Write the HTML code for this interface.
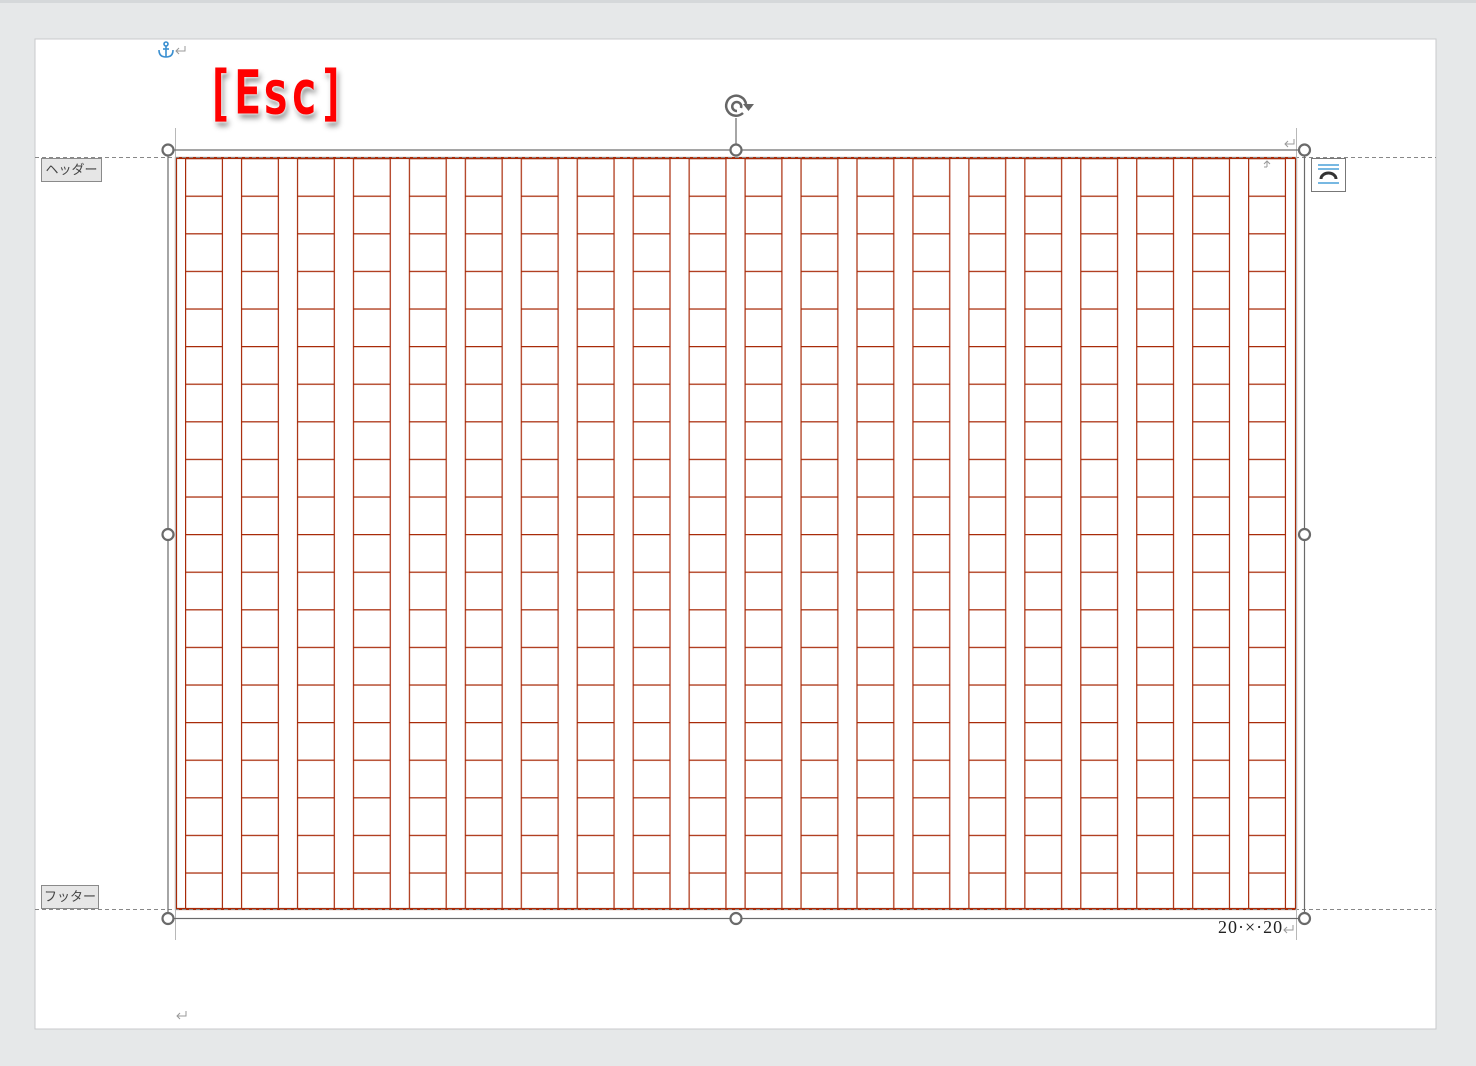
<!DOCTYPE html>
<html><head><meta charset="utf-8"><style>
html,body{margin:0;padding:0;width:1476px;height:1066px;overflow:hidden;background:#e6e8e9;}
svg{position:absolute;left:0;top:0}
.lbl{position:absolute;background:#e6e6e6;border:1px solid #8a8a8a;font:13px "Liberation Sans","Noto Sans CJK JP",sans-serif;color:#444;text-align:center;line-height:21px}
.esc{position:absolute;left:206px;top:57px;font:bold 45px "DejaVu Sans Mono","Liberation Mono",monospace;color:#f00;letter-spacing:1px;transform:scaleY(1.35);transform-origin:0 0;text-shadow:0 0 2px #fff,0 0 3px #fff,2px 3px 5px rgba(0,0,0,.45)}
.num{position:absolute;left:1218px;top:917px;font:18px "Liberation Serif",serif;color:#222;letter-spacing:1px}
</style></head><body>
<svg width="1476" height="1066" viewBox="0 0 1476 1066">
<defs>
<pattern id="g" patternUnits="userSpaceOnUse" x="185" y="158" width="55.95" height="37.6">
<line x1="0.6" y1="0" x2="0.6" y2="37.6" stroke="#a82a08" stroke-width="1.2"/>
<line x1="37.4" y1="0" x2="37.4" y2="37.6" stroke="#a82a08" stroke-width="1.2"/>
<line x1="0" y1="0.6" x2="37.5" y2="0.6" stroke="#a82a08" stroke-width="1.2"/>
</pattern>
</defs>
<rect x="0" y="0" width="1476" height="3" fill="#d5d8da"/>
<rect x="35" y="39" width="1401" height="990" fill="#fff" stroke="#c8cacc"/>
<rect x="185" y="158" width="1102" height="752" fill="url(#g)"/>
<rect x="176" y="158" width="1120" height="751" fill="none" stroke="#a82a08" stroke-width="2.2"/>
<line x1="35" y1="157.5" x2="1436" y2="157.5" stroke="#888" stroke-dasharray="4,3"/>
<line x1="35" y1="909.5" x2="1436" y2="909.5" stroke="#888" stroke-dasharray="4,3"/>
<line x1="175.5" y1="128" x2="175.5" y2="940" stroke="#b8b8b8"/>
<line x1="1296.5" y1="128" x2="1296.5" y2="940" stroke="#b8b8b8"/>
<rect x="168" y="150" width="1136.5" height="768.5" fill="none" stroke="#6a6a6a" stroke-width="1.2"/>
<line x1="736" y1="118" x2="736" y2="150" stroke="#6a6a6a" stroke-width="1.2"/>
<g fill="#fff" stroke="#6a6a6a" stroke-width="2.2">
<circle cx="168" cy="150" r="5.5"/><circle cx="736" cy="150" r="5.5"/><circle cx="1304.5" cy="150" r="5.5"/>
<circle cx="168" cy="534.5" r="5.5"/><circle cx="1304.5" cy="534.5" r="5.5"/>
<circle cx="168" cy="918.5" r="5.5"/><circle cx="736" cy="918.5" r="5.5"/><circle cx="1304.5" cy="918.5" r="5.5"/>
</g>
<g fill="none" stroke="#666" stroke-width="2.5">
<path d="M746 104 A10 10 0 1 0 743 113"/>
<path d="M741 108 A4.5 4.5 0 1 0 737 111"/>
</g>
<path d="M743 104 L754 104 L748.5 111 Z" fill="#666"/>
<rect x="1311.5" y="158.5" width="34" height="33" fill="#fff" stroke="#777"/>
<g stroke="#4aa0d8" stroke-width="1.5"><line x1="1318" y1="165" x2="1339" y2="165"/><line x1="1318" y1="169" x2="1339" y2="169"/><line x1="1318" y1="183" x2="1339" y2="183"/></g>
<path d="M1321 179 A7.5 6 0 0 1 1336 179" fill="none" stroke="#333" stroke-width="3"/>
<g fill="none" stroke="#999" stroke-width="1"><path d="M1294 139 v5 h-9 M1288 141 l-3 3 3 3"/>
<path d="M1293 925 v5 h-9 M1287 927 l-3 3 3 3"/>
<path d="M186 1011 v5 h-9 M180 1013 l-3 3 3 3"/>
<path d="M185 46 v5 h-9 M179 48 l-3 3 3 3"/>
<path d="M1267 167 v-6 M1264 164 l3-3 3 3 M1264 167 h3"/></g>
<g fill="none" stroke="#3a8fd0" stroke-width="1.6"><circle cx="166" cy="44" r="2"/><line x1="166" y1="46" x2="166" y2="57"/><path d="M159 50 q0 7 7 7 q7 0 7-7"/><line x1="163" y1="49" x2="169" y2="49"/></g>
</svg>
<div class="lbl" style="left:41px;top:158px;width:59px;height:22px">ヘッダー</div>
<div class="lbl" style="left:41px;top:885px;width:56px;height:22px">フッター</div>
<div class="esc">[Esc]</div>
<div class="num">20·×·20</div>
</body></html>
